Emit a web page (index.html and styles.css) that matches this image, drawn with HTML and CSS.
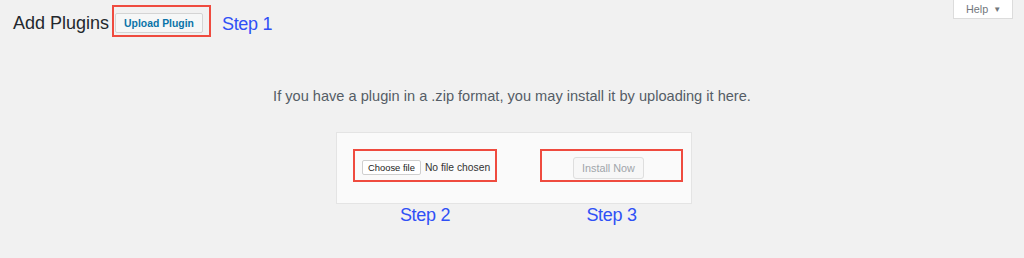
FILE: index.html
```html
<!DOCTYPE html>
<html>
<head>
    <title>Add Plugins</title>
    <link rel="stylesheet" href="styles.css">
</head>
<body>
    <div class="page-header">
        <h1>Add Plugins</h1>
        <div class="mark mark-title">
            <button class="upload-button">Upload Plugin</button>
        </div>
        <div class="step step-one">Step 1</div>
        <div class="help-tab">Help <span class="arrow">&#9660;</span></div>
    </div>

    <p class="install-help">If you have a plugin in a .zip format, you may install it by uploading it here.</p>

    <div class="uploader">
        <div class="upload-form">
            <div class="mark mark-file">
                <span class="file-button">Choose file</span>
                <span class="file-name">No file chosen</span>
            </div>
            <div class="mark mark-install">
                <button class="install-button" disabled>Install Now</button>
            </div>
        </div>
        <div class="steps">
            <div class="step step-file">Step 2</div>
            <div class="step step-install">Step 3</div>
        </div>
    </div>
</body>
</html>
```

FILE: styles.css
```css
body {
    margin: 0;
    background-color: #f1f1f1;
    color: #23282d;
    font-family: 'Liberation Sans', Arial, sans-serif;
}
.page-header {
    display: flex;
    align-items: flex-start;
    padding-left: 13px;
}
h1 {
    margin: 11px 3px 0 0;
    font-size: 18px;
    font-weight: 400;
    line-height: 24px;
}
.mark {
    border: 2px solid #ef4b3f;
    box-sizing: border-box;
}
.mark-title {
    margin-top: 5px;
    padding: 6px 6px 2px 1px;
}
.upload-button {
    display: block;
    height: 20px;
    padding: 0 8px;
    border: 1px solid #d4d4d4;
    border-radius: 2px;
    background-color: #f6f7f7;
    color: #0a73a8;
    font-family: 'Liberation Sans', Arial, sans-serif;
    font-size: 10.4px;
    font-weight: 700;
}
.step {
    color: #2f50f6;
    font-size: 18px;
    letter-spacing: -0.3px;
    line-height: 22px;
}
.step-one {
    margin: 13px 0 0 11px;
}
.help-tab {
    margin-left: auto;
    margin-right: 11px;
    width: 60px;
    height: 19px;
    box-sizing: border-box;
    padding-left: 12px;
    border: 1px solid #dcdcdc;
    border-top: none;
    background-color: #fff;
    color: #72777c;
    font-size: 10.8px;
    line-height: 18px;
}
.arrow {
    margin-left: 2px;
    font-size: 8px;
    vertical-align: 1px;
}
.install-help {
    margin: 49px 0 26px;
    color: #555d66;
    font-size: 14.6px;
    line-height: 20px;
    text-align: center;
}
.uploader {
    width: 356px;
    margin: 0 auto;
    padding-left: 4px;
}
.upload-form {
    display: flex;
    gap: 43px;
    padding: 16px 8px 21px 16px;
    border: 1px solid #e4e4e4;
    background-color: #fafafa;
}
.mark-file {
    display: flex;
    align-items: center;
    gap: 4px;
    width: 144px;
    height: 33px;
    padding: 3px 0 0 7px;
}
.file-button {
    height: 15px;
    padding: 0 5px;
    border: 1px solid #cfcfcf;
    border-radius: 2px;
    background-color: #fff;
    box-sizing: border-box;
    color: #222;
    font-size: 9.4px;
    line-height: 13px;
}
.file-name {
    color: #333;
    font-size: 10.3px;
}
.mark-install {
    display: flex;
    align-items: flex-end;
    width: 143px;
    height: 33px;
    padding: 0 0 1px 31px;
}
.install-button {
    height: 22px;
    padding: 0 8px;
    border: 1px solid #dedede;
    border-radius: 3px;
    background-color: #f7f7f7;
    color: #a0a5aa;
    font-family: 'Liberation Sans', Arial, sans-serif;
    font-size: 10.8px;
}
.steps {
    display: flex;
    gap: 43px;
    padding-left: 17px;
}
.step-file {
    width: 144px;
    text-align: center;
}
.step-install {
    width: 143px;
    text-align: center;
}
```
